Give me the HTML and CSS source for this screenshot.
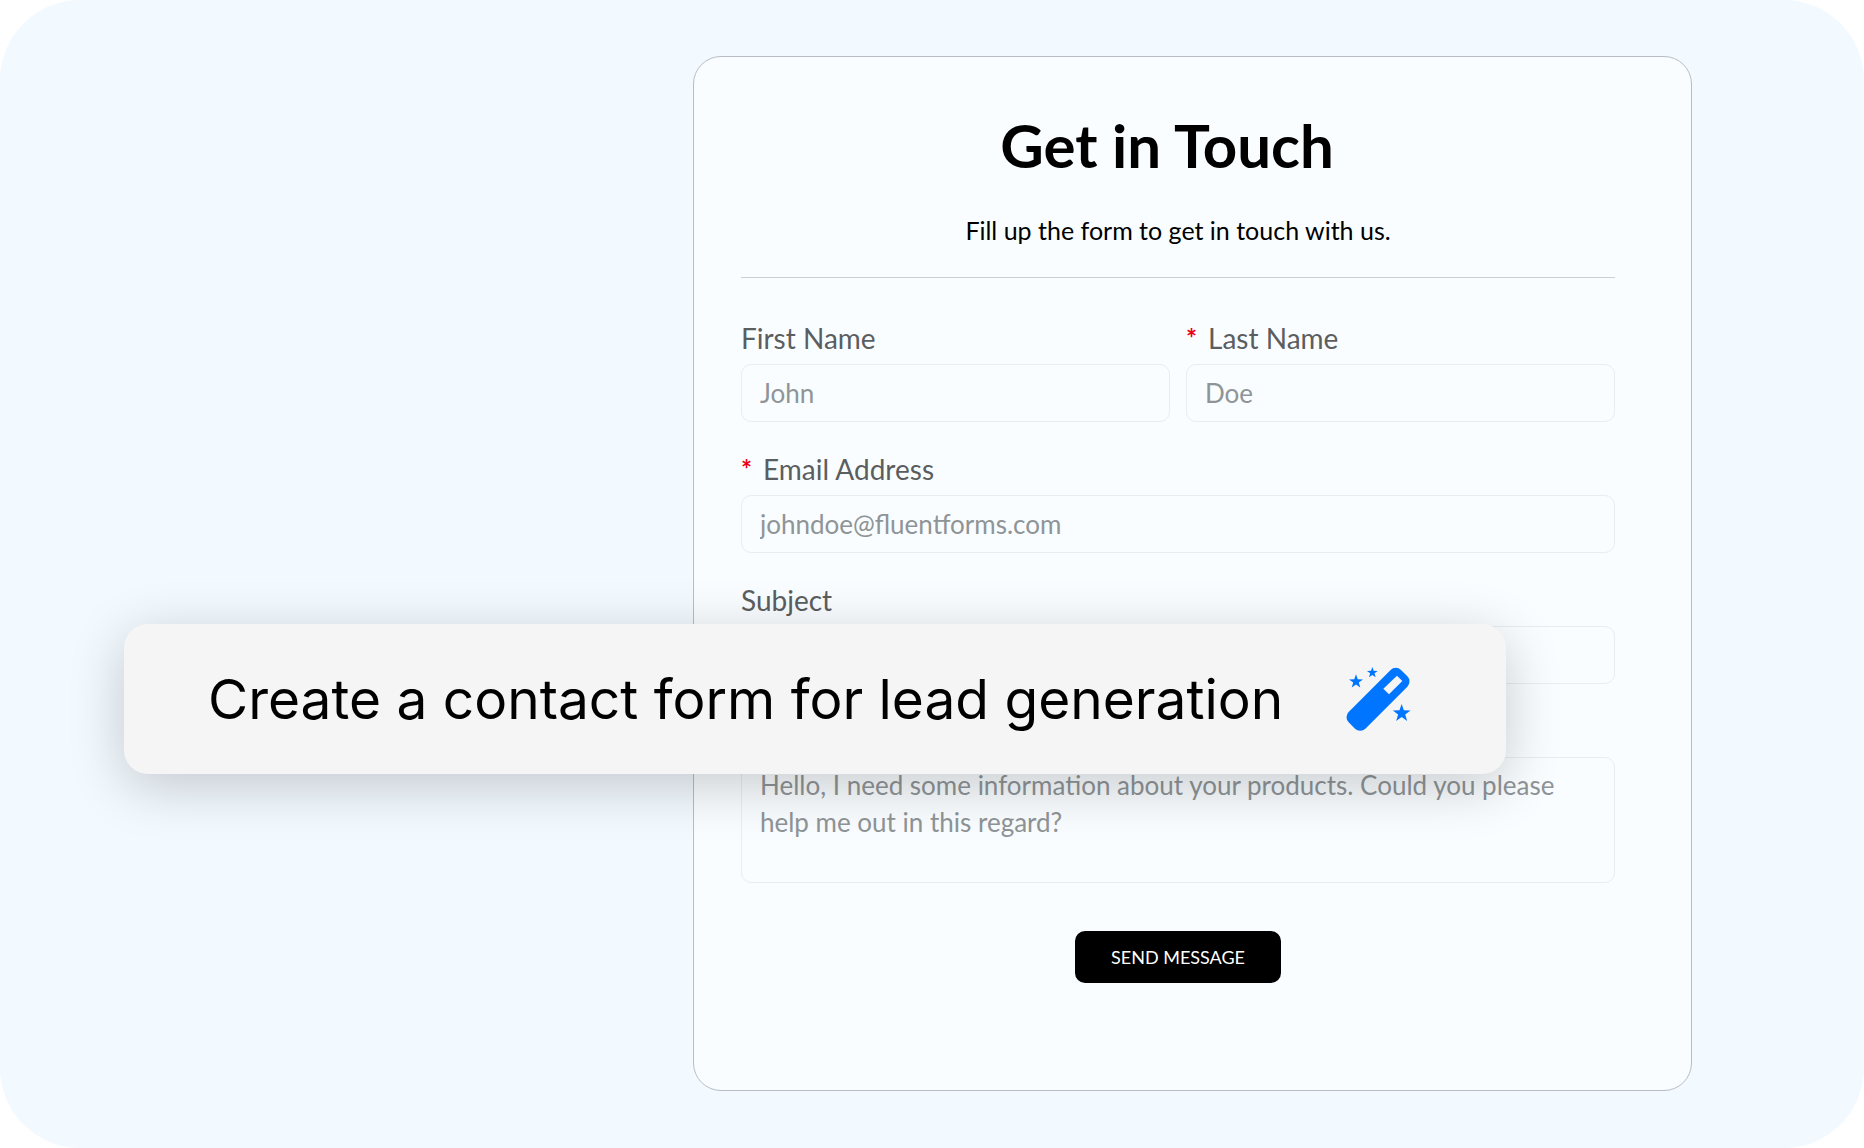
FILE: index.html
```html
<!DOCTYPE html>
<html lang="en">
<head>
<meta charset="utf-8">
<meta name="viewport" content="width=device-width, initial-scale=1">
<title>Get in Touch</title>
<link rel="stylesheet" href="styles.css">
</head>
<body>
<main class="stage">
  <form class="card">
    <h1 class="title">Get in Touch</h1>
    <p class="subtitle">Fill up the form to get in touch with us.</p>
    <hr class="divider">
    <div class="fields">
      <div class="row">
        <div class="field">
          <label class="label" for="first">First Name</label>
          <input class="control" id="first" type="text" placeholder="John">
        </div>
        <div class="field">
          <label class="label" for="last"><span class="required">*</span>Last Name</label>
          <input class="control" id="last" type="text" placeholder="Doe" required>
        </div>
      </div>
      <div class="field">
        <label class="label" for="email"><span class="required">*</span>Email Address</label>
        <input class="control" id="email" type="email" placeholder="johndoe@fluentforms.com" required>
      </div>
      <div class="field">
        <label class="label" for="subject">Subject</label>
        <input class="control" id="subject" type="text">
      </div>
      <div class="field">
        <label class="label" for="message">Message</label>
        <textarea class="control message" id="message" placeholder="Hello, I need some information about your products. Could you please help me out in this regard?"></textarea>
      </div>
    </div>
    <button class="send" type="submit">SEND MESSAGE</button>
  </form>

  <form class="prompt">
    <input class="prompt-text" type="text" aria-label="Prompt" value="Create a contact form for lead generation">
    <button class="wand" type="button" aria-label="Generate">
      <svg viewBox="78 80 198 198" width="66" height="66" fill="#0075ff" aria-hidden="true">
        <defs>
          <path id="star" d="M0-1 .235-.324 .951-.309 .38.124 .588.809 0 .4-.588.809-.38.124-.951-.309-.235-.324Z"/>
        </defs>
        <rect x="63" y="144.500" width="222" height="71" rx="22" transform="rotate(-45 174 180)"/>
        <path fill="#f5f5f5" d="M231 109 247 125 207 165 190 148Z"/>
        <use href="#star" transform="translate(108 127) scale(22)"/>
        <use href="#star" transform="translate(157 100) scale(17)"/>
        <use href="#star" transform="translate(245 222) scale(28)"/>
      </svg>
    </button>
  </form>
</main>
</body>
</html>
```
FILE: styles.css
```css
*,
*::before,
*::after {
  box-sizing: border-box;
}

body {
  margin: 0;
  background: #fff;
  font-family: Lato, "Open Sans", sans-serif;
  color: #000;
}

.stage {
  position: relative;
  display: flex;
  justify-content: flex-end;
  align-items: flex-start;
  min-height: 100vh;
  padding: 56px 172px 56px 124px;
  border-radius: 80px;
  background: #f2f9ff;
}

.card {
  display: flex;
  flex-direction: column;
  width: 100%;
  max-width: 999px;
  padding: 56px 76px 107px 47px;
  border: 1px solid #b9bcc4;
  border-radius: 28px;
  background: #f9fdff;
}

.title {
  margin: 0;
  padding-right: 22px;
  font-size: 60px;
  line-height: 64px;
  font-weight: 700;
  text-align: center;
}

.subtitle {
  margin: 35px 0 0;
  font-size: 25px;
  line-height: 36px;
  text-align: center;
}

.divider {
  width: 100%;
  margin: 29px 0 44px;
  border: 0;
  border-top: 1px solid #ccd0d4;
}

.fields {
  display: flex;
  flex-direction: column;
  gap: 31px;
}

.row {
  display: grid;
  grid-template-columns: 1fr 1fr;
  gap: 16px;
}

.field {
  display: flex;
  flex-direction: column;
  gap: 10px;
}

.label {
  display: flex;
  gap: 11px;
  color: #5b5e60;
  font-size: 28px;
  line-height: 32px;
}

.required {
  color: #ec0014;
  font-size: 26px;
  font-weight: 700;
}

.control {
  width: 100%;
  height: 58px;
  margin: 0;
  padding: 0 18px;
  border: 1px solid #e9edf1;
  border-radius: 10px;
  background: transparent;
  color: #333;
  font: inherit;
  font-size: 26px;
}

.control::placeholder {
  color: #8f9497;
  opacity: 1;
}

.message {
  display: block;
  height: 126px;
  padding: 9px 18px;
  line-height: 37px;
  resize: none;
}

.send {
  align-self: center;
  margin-top: 48px;
  padding: 0 36px;
  border: 0;
  border-radius: 10px;
  background: #000;
  color: #fff;
  font: inherit;
  font-size: 18px;
  line-height: 52px;
}

/* Prompt bar floating over the form */
.prompt {
  position: absolute;
  top: 624px;
  left: 124px;
  right: 358px;
  display: flex;
  align-items: center;
  gap: 52px;
  height: 150px;
  padding: 0 94px 0 84px;
  border-radius: 24px;
  background: #f5f5f5;
  box-shadow: 0 12px 56px rgba(0, 0, 0, 0.2);
}

.prompt-text {
  flex: 1;
  min-width: 0;
  height: 80px;
  padding: 0;
  border: 0;
  background: transparent;
  color: #000;
  font-family: Inter, sans-serif;
  font-size: 55px;
}

.wand {
  display: flex;
  padding: 0;
  border: 0;
  background: transparent;
}
```
